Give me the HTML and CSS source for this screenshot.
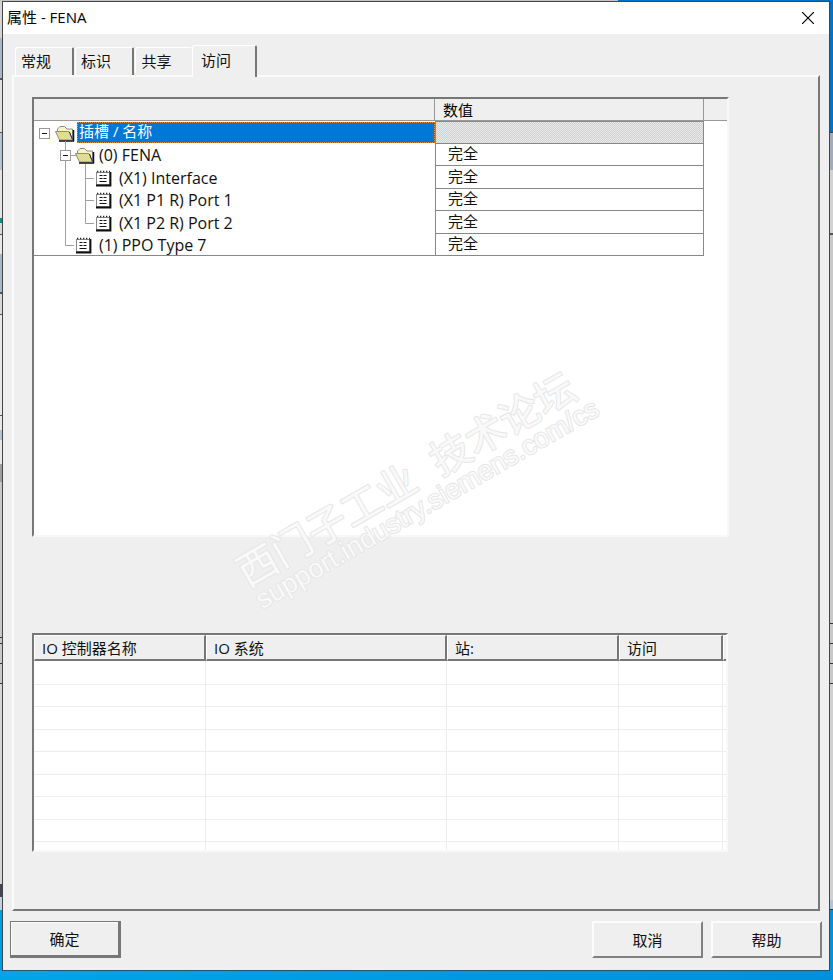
FILE: index.html
```html
<!DOCTYPE html>
<html lang="zh-CN">
<head>
<meta charset="utf-8">
<title>属性 - FENA</title>
<link rel="stylesheet" href="styles.css">
</head>
<body>
<svg class="defs" aria-hidden="true">
  <defs>
    <pattern id="hatch" width="2" height="2" patternUnits="userSpaceOnUse">
      <rect width="2" height="2" fill="#f0ef50"/>
      <rect width="1" height="1" fill="#d6d68c"/>
      <rect x="1" y="1" width="1" height="1" fill="#d6d68c"/>
    </pattern>
    <symbol id="folder" viewBox="0 0 20 17" overflow="visible">
      <path d="M2.500 7V4L5 1.500H9.500L12 4H17.500V14" fill="#f4f4c8" stroke="#8c8c8c"/>
      <path d="M.5 6.500H14L17.500 15H4.500Z" fill="url(#hatch)" stroke="#8c8c8c"/>
      <path d="M4 16H19M18.500 5V16.500" stroke="#111" stroke-width="1.500" fill="none"/>
      <path d="M14.500 7L17.500 14.500" stroke="#333" fill="none"/>
    </symbol>
    <symbol id="doc" viewBox="0 0 17 17" overflow="visible">
      <rect x="1.500" y="2.500" width="13" height="12" fill="#fff" stroke="#888"/>
      <path d="M15.500 2V15.500H1" fill="none" stroke="#111" stroke-width="1.800"/>
      <path d="M2 1.500H15" stroke="#222" stroke-width="1.500" stroke-dasharray="1.300 1.700"/>
      <path d="M4.500 5.500H7.500M8.500 5.500H11.500M4.500 8.500H7.500M8.500 8.500H11.500M4.500 11.500H11.500" stroke="#111" stroke-width="1.200"/>
    </symbol>
    <symbol id="minus" viewBox="0 0 11 11">
      <rect x=".5" y=".5" width="10" height="10" fill="#fff" stroke="#999"/>
      <path d="M3 5.500H8" stroke="#111"/>
    </symbol>
  </defs>
</svg>
<main class="dialog">
  <header class="title-bar">
    <h1>属性 - FENA</h1>
    <button class="close" type="button" aria-label="关闭">
      <svg width="12" height="12" viewBox="0 0 12 12"><path d="M0 0L12 12M12 0L0 12" stroke="#000" stroke-width="1.200"/></svg>
    </button>
  </header>
  <nav class="tabs" role="tablist">
    <button class="tab" type="button" role="tab">常规</button>
    <button class="tab" type="button" role="tab">标识</button>
    <button class="tab tab-last" type="button" role="tab">共享</button>
    <button class="tab tab-active" type="button" role="tab" aria-selected="true">访问</button>
  </nav>
  <section class="panel">
    <div class="box tree-box">
      <table class="tree">
        <colgroup><col><col class="col-value"><col class="col-rest"></colgroup>
        <thead><tr><th></th><th class="value-head">数值</th><th></th></tr></thead>
        <tbody>
          <tr>
            <td><div class="node">
              <svg class="guides" width="43" height="22"><use href="#minus" x="5" y="6" width="11" height="11"/><use href="#folder" x="21" y="3" width="20" height="17"/></svg>
              <span class="selected">插槽 / 名称</span></div></td>
            <td class="value shaded"></td><td></td>
          </tr>
          <tr>
            <td><div class="node">
              <svg class="guides" width="63" height="22"><path d="M31.500 -3V23M36 11.500H42" stroke="#a0a0a0"/><use href="#minus" x="26" y="6" width="11" height="11"/><use href="#folder" x="41" y="3" width="20" height="17"/></svg>
              <span class="label">(0) FENA</span></div></td>
            <td class="value">完全</td><td></td>
          </tr>
          <tr>
            <td><div class="node">
              <svg class="guides" width="83" height="22"><path d="M31.500 -1V23M51.500 -3V23M52 11.500H60" stroke="#a0a0a0"/><use href="#doc" x="61" y="3" width="17" height="17"/></svg>
              <span class="label">(X1) Interface</span></div></td>
            <td class="value">完全</td><td></td>
          </tr>
          <tr>
            <td><div class="node">
              <svg class="guides" width="83" height="22"><path d="M31.500 -1V23M51.500 -1V23M52 11.500H60" stroke="#a0a0a0"/><use href="#doc" x="61" y="3" width="17" height="17"/></svg>
              <span class="label">(X1 P1 R) Port 1</span></div></td>
            <td class="value">完全</td><td></td>
          </tr>
          <tr>
            <td><div class="node">
              <svg class="guides" width="83" height="22"><path d="M31.500 -1V23M51.500 -1V11.500H60" fill="none" stroke="#a0a0a0"/><use href="#doc" x="61" y="3" width="17" height="17"/></svg>
              <span class="label">(X1 P2 R) Port 2</span></div></td>
            <td class="value">完全</td><td></td>
          </tr>
          <tr class="last-row">
            <td><div class="node">
              <svg class="guides" width="63" height="22"><path d="M31.500 -1V11.500H40" fill="none" stroke="#a0a0a0"/><use href="#doc" x="41" y="3" width="17" height="17"/></svg>
              <span class="label">(1) PPO Type 7</span></div></td>
            <td class="value">完全</td><td></td>
          </tr>
        </tbody>
      </table>
    </div>
    <div class="box list-box">
      <table class="list">
        <colgroup><col class="c1"><col class="c2"><col class="c3"><col class="c4"><col></colgroup>
        <thead><tr><th>IO 控制器名称</th><th>IO 系统</th><th>站:</th><th>访问</th><th class="rest"></th></tr></thead>
        <tbody>
          <tr class="first"><td></td><td></td><td></td><td></td><td></td></tr>
          <tr><td></td><td></td><td></td><td></td><td></td></tr>
          <tr><td></td><td></td><td></td><td></td><td></td></tr>
          <tr><td></td><td></td><td></td><td></td><td></td></tr>
          <tr><td></td><td></td><td></td><td></td><td></td></tr>
          <tr><td></td><td></td><td></td><td></td><td></td></tr>
          <tr><td></td><td></td><td></td><td></td><td></td></tr>
          <tr><td></td><td></td><td></td><td></td><td></td></tr>
          <tr class="partial"><td></td><td></td><td></td><td></td><td></td></tr>
        </tbody>
      </table>
    </div>
  </section>
  <footer class="actions">
    <button class="btn btn-default" type="button">确定</button>
    <button class="btn" type="button">取消</button>
    <button class="btn" type="button">帮助</button>
  </footer>
  <svg class="watermark" width="440" height="280" viewBox="0 0 440 280" aria-hidden="true">
    <g transform="translate(28 237) rotate(-30)">
      <text class="mark-cn" x="4" y="-8">西门子工业</text>
      <text class="mark-cn" x="227" y="-8">技术论坛</text>
      <text class="mark-url" x="6" y="18">support.industry.siemens.com/cs</text>
    </g>
  </svg>
</main>
</body>
</html>
```
FILE: styles.css
```css
* { box-sizing: border-box; }

body {
  margin: 0;
  padding: 1px 3px 9px 2px;
  min-height: 100vh;
  font: 15px/20px "Open Sans", "Noto Sans CJK SC", sans-serif;
  color: #111;
  background:
    linear-gradient(90deg, #c6c6c6 0 618px, #0073c6 618px) top / 100% 1px no-repeat,
    linear-gradient(90deg, #00a5e8, #0090dc) bottom / 100% 9px no-repeat,
    linear-gradient(#d4d4d4 0 38px, #a9b8c9 38px 78px, #555 78px 80px, #e0e0e0 80px 132px,
      #555 132px 133px, #b5c3d3 133px 170px, #e4e4e4 170px 218px, #00908c 218px 223px,
      #d8d8d8 223px 234px, #555 234px 235px, #e8e8e8 235px 254px, #a9b8c9 254px 292px,
      #555 292px 294px, #d8d8d8 294px 314px, #555 314px 315px, #e8e8e8 315px 415px,
      #555 415px 416px, #e8e8e8 416px 430px, #b5c3d3 430px 440px, #e8e8e8 440px 464px,
      #a0a0a0 464px 482px, #c8c8c8 482px 637px, #333 637px 638px, #c8c8c8 638px 643px,
      #333 643px 644px, #c8c8c8 644px 663px, #333 663px 664px, #c8c8c8 664px 683px,
      #333 683px 684px, #d6d6d6 684px 884px, #445 884px 897px, #c5d0de 897px 910px,
      #009fe0 910px) left / 2px 100% no-repeat,
    linear-gradient(#0073c6 0 132px, #444 132px 133px, #a3adba 133px 170px, #d2d2d2 170px 233px,
      #555 233px 235px, #c8c8c8 235px 623px, #333 623px 624px, #c8c8c8 624px 643px,
      #333 643px 644px, #c8c8c8 644px 663px, #333 663px 664px, #c8c8c8 664px 683px,
      #333 683px 684px, #d0d0d0 684px 900px, #b5c3d3 900px 909px, #333 909px 910px,
      #0090dc 910px) right / 3px 100% no-repeat;
}

button { font: inherit; color: inherit; }

.defs { position: absolute; width: 0; height: 0; }

.dialog {
  position: relative;
  border: 1px solid #454545;
  border-bottom-color: #24566a;
  background: #efefef;
}

.title-bar {
  display: flex;
  align-items: center;
  justify-content: space-between;
  height: 32px;
  padding: 0 15px 0 4px;
  background: #fff;
}

.title-bar h1 { margin: 0; padding-bottom: 2px; font-size: 15px; font-weight: 400; color: #000; }

.close { display: flex; padding: 0; border: 0; background: none; }

.tabs {
  display: flex;
  align-items: flex-end;
  height: 41px;
  padding-left: 12px;
}

.tab {
  width: 59px;
  height: 28px;
  margin-right: 1px;
  padding: 0 16px 1px 0;
  border: solid #fff;
  border-width: 1px 0 0 1px;
  border-right: 2px solid #777;
  border-radius: 3px 2px 0 0;
  background: #efefef;
}

.tab-last { width: 57px; margin-right: 0; padding-right: 15px; border-right: 0; }

.tab-active {
  position: relative;
  z-index: 1;
  width: 65px;
  height: 32px;
  margin: 0 0 -2px;
  padding-bottom: 4px;
}

.panel {
  margin: 0 9px;
  padding: 20px 89px 57px 18px;
  border: 2px solid;
  border-color: #fbfbfb #777 #777 #fbfbfb;
}

.box {
  border: 2px solid;
  border-color: #777 #f8f8f8 #f8f8f8 #777;
  background: #fff;
}

.tree-box { min-height: 440px; margin-bottom: 96px; }

table {
  width: 100%;
  table-layout: fixed;
  border-collapse: separate;
  border-spacing: 0;
}

th, td { padding: 0; font-weight: 400; text-align: left; }

.col-value { width: 269px; }
.col-rest { width: 23px; }

.tree th {
  height: 22px;
  border: solid #999;
  border-width: 0 1px 1px 0;
  background: #efefef;
}

.tree th:last-child { border-right: 0; }
.tree .value-head { padding-left: 8px; line-height: 20px; color: #000; }
.tree tbody tr { height: 23px; }
.tree tbody tr:nth-child(even) { height: 22px; }
.last-row td:first-child { border-bottom: 1px solid #888; }

.node { display: flex; align-items: center; height: 20px; }
.guides { flex: none; overflow: visible; }
.label { padding-left: 2px; font-size: 16px; white-space: nowrap; }

.selected {
  flex: 1;
  height: 21px;
  padding-left: 1px;
  border: 1px dotted #e08a3c;
  line-height: 17px;
  background: #0078d7;
  color: #fff;
}

.value {
  padding: 0 0 2px 12px;
  border: solid #888;
  border-width: 0 1px 1px;
  line-height: 19px;
}

.shaded {
  border-top-width: 1px;
  background: repeating-conic-gradient(#d2d2d2 0 25%, #e8e8e8 0 50%) 0 0 / 2px 2px;
}

.list-box { margin-right: 1px; }

.c1, .c3 { width: 172px; }
.c2 { width: 241px; }
.c4 { width: 104px; }

.list th {
  height: 26px;
  padding-left: 7px;
  border: solid;
  border-width: 1px 2px 2px 1px;
  border-color: #fff #777 #777 #fff;
  line-height: 22px;
  background: #efefef;
}

.list .rest { padding: 0; border-right: 0; }
.list td { border: solid #ededed; border-width: 0 1px 1px 0; }
.list td:last-child { border-right: 0; }
.list tbody tr { height: 23px; }
.list tbody tr.first { height: 24px; }
.list tbody tr:nth-child(even) { height: 22px; }
.list tbody tr.partial { height: 8px; }
.list .partial td { border-bottom: 0; }

.actions { display: flex; gap: 8px; padding: 10px 7px 12px; }

.btn {
  width: 111px;
  height: 37px;
  padding: 0;
  border: 2px solid;
  border-color: #fcfcfc #808080 #808080 #fcfcfc;
  background: #efefef;
}

.btn-default {
  margin-right: auto;
  border-width: 1px 3px 3px 1px;
  border-color: #777;
  box-shadow: inset 1px 1px #fff;
}

.watermark {
  position: absolute;
  left: 217px;
  top: 358px;
  overflow: visible;
  pointer-events: none;
}

.watermark text {
  fill: #f9f9f9;
  stroke: #e6e6e6;
  stroke-width: 2px;
  stroke-linejoin: round;
  paint-order: stroke;
}

.mark-cn { font: 400 40px "Noto Sans CJK SC", sans-serif; }
.mark-url { font: 27px "Liberation Sans", sans-serif; }
```
